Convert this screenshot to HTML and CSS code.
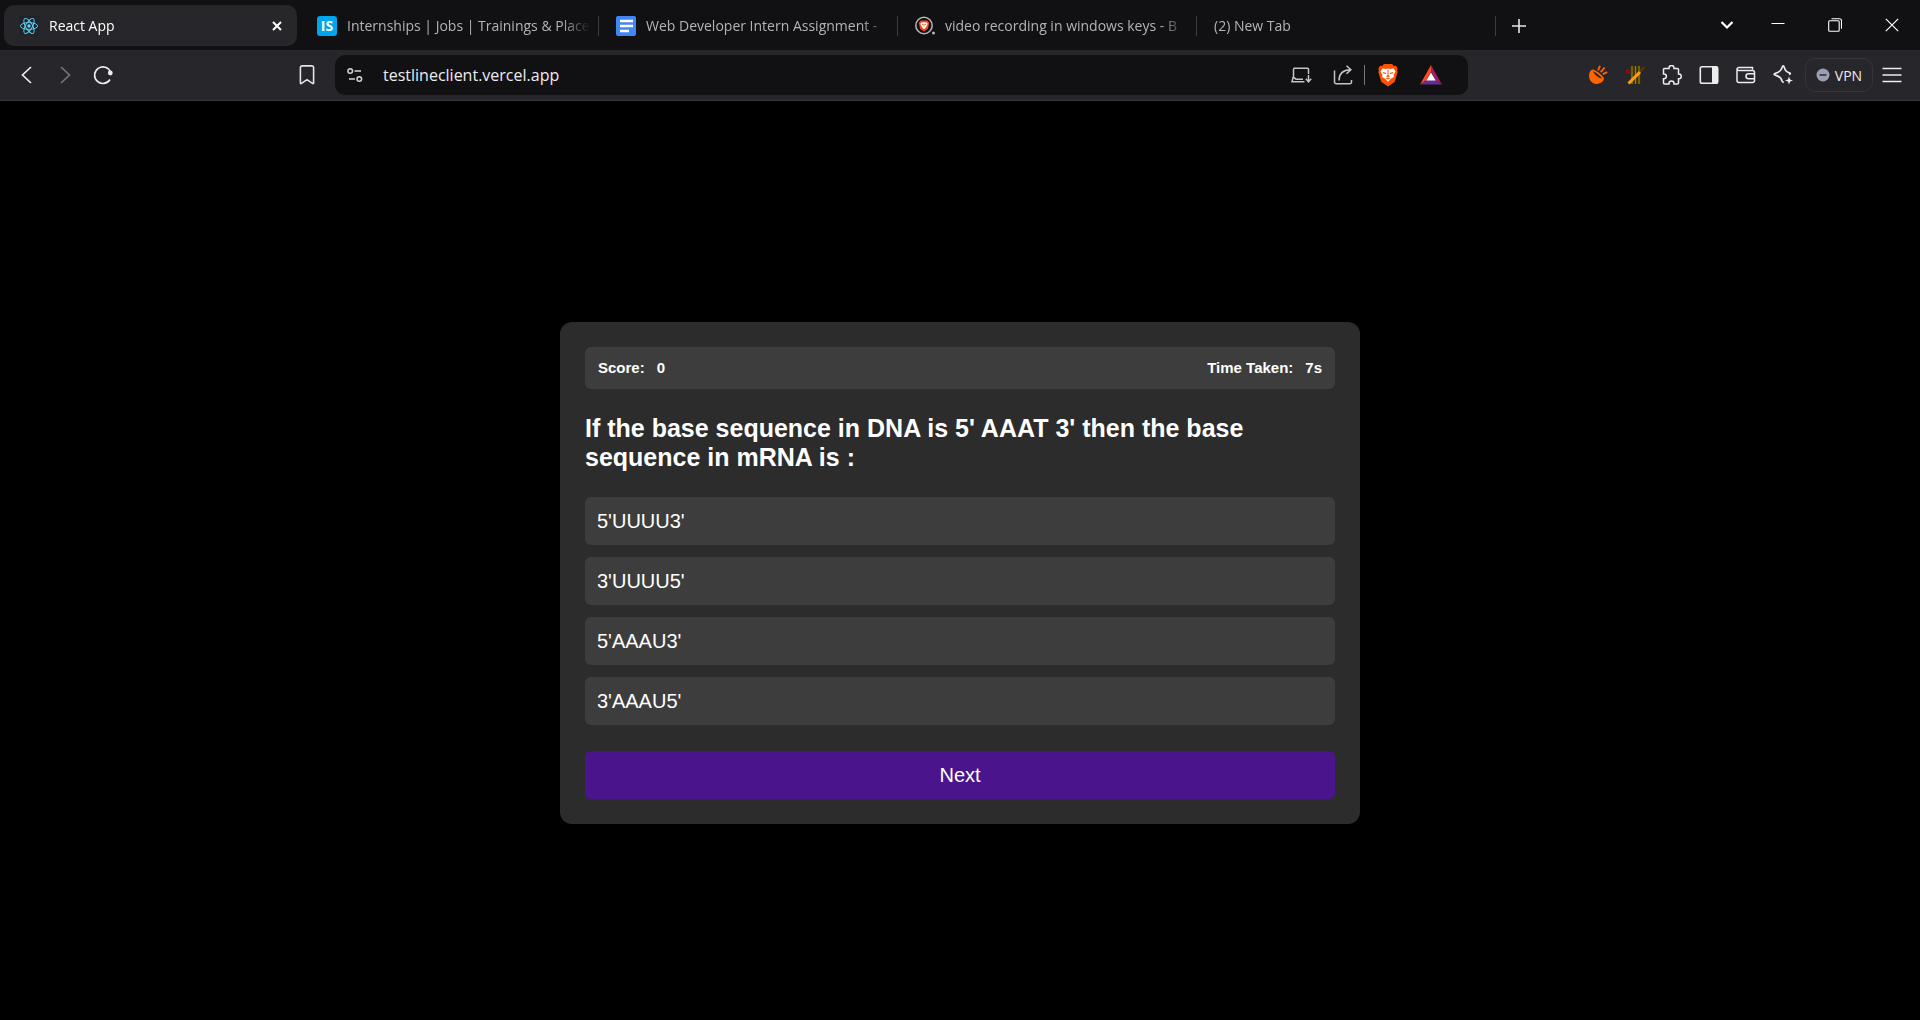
FILE: index.html
```html
<!DOCTYPE html>
<html lang="en">
<head>
<meta charset="utf-8">
<meta name="viewport" content="width=device-width, initial-scale=1">
<title>React App</title>
<link rel="stylesheet" href="styles.css">
</head>
<body>
<header class="browser">
  <div class="tabstrip">
    <div class="tabs">
      <div class="tab tab-active">
        <svg class="favicon" viewBox="0 0 20 20" width="20" height="20"><rect width="20" height="20" fill="#20232a"/><g fill="none" stroke="#61dafb" stroke-width="0.9"><ellipse cx="10" cy="10" rx="8.6" ry="3.4"/><ellipse cx="10" cy="10" rx="8.6" ry="3.4" transform="rotate(60 10 10)"/><ellipse cx="10" cy="10" rx="8.6" ry="3.4" transform="rotate(120 10 10)"/></g><circle cx="10" cy="10" r="1.7" fill="#61dafb"/></svg>
        <span class="tab-title">React App</span>
        <button class="tab-close" aria-label="Close tab"><svg viewBox="0 0 12 12" width="12" height="12"><path d="M2 2l8 8M10 2l-8 8" fill="none" stroke="#fff" stroke-width="2"/></svg></button>
      </div>
      <div class="tab">
        <span class="favicon favicon-is">IS</span>
        <span class="tab-title">Internships | Jobs | Trainings &amp; Place</span>
      </div>
      <div class="tab">
        <svg class="favicon" viewBox="0 0 20 20" width="20" height="20"><rect width="20" height="20" rx="2" fill="#4285f4"/><path d="M4 5h13M4 10h13M4 15h9" stroke="#fff" stroke-width="2.4" fill="none"/></svg>
        <span class="tab-title">Web Developer Intern Assignment -</span>
      </div>
      <div class="tab">
        <svg class="favicon" viewBox="0 0 20 20" width="20" height="20"><circle cx="9" cy="9.500" r="8.200" fill="none" stroke="#b5b5bd" stroke-width="1.500"/><path d="M5.800 4.500h6.400l2 2.200-1.300 6L9 15.500l-3.900-2.800-1.300-6z" fill="#f4471f"/><path d="M5.800 6.800L9 6.200l3.200.600.400 1.200-1.400 3L9 13.200 6.800 11 5.400 8z" fill="#fff"/><path d="M7 8.500h1.200M9.800 8.500H11M9 8v2.500" stroke="#f4471f" stroke-width=".8"/><circle cx="18.500" cy="17" r="1.500" fill="#b5b5bd"/></svg>
        <span class="tab-title">video recording in windows keys - B</span>
      </div>
      <div class="tab">
        <span class="tab-title">(2) New Tab</span>
      </div>
      <button class="new-tab" aria-label="New tab"><svg viewBox="0 0 14 14" width="14" height="14"><path d="M7 0v14M0 7h14" stroke="#e6e6e8" stroke-width="1.600" fill="none"/></svg></button>
    </div>
    <div class="window-controls">
      <button class="control control-search" aria-label="Search tabs"><svg viewBox="0 0 14 10" width="14" height="10"><path d="M1.500 2L7 7.500 12.500 2" fill="none" stroke="#fff" stroke-width="2.200"/></svg></button>
      <button class="control" aria-label="Minimize"><svg viewBox="0 0 14 14" width="14" height="14"><path d="M.5 5.500h13" stroke="#fff" fill="none"/></svg></button>
      <button class="control" aria-label="Restore"><svg viewBox="0 0 14 14" width="14" height="14"><g fill="none" stroke="#fff" stroke-width="1.100"><rect x=".7" y="2.700" width="10.500" height="10.500" rx="1"/><path d="M3.500.700h8a2 2 0 0 1 2 2v8"/></g></svg></button>
      <button class="control" aria-label="Close"><svg viewBox="0 0 14 14" width="14" height="14"><path d="M.8.800l12.400 12.400M13.200.800L.8 13.200" stroke="#fff" stroke-width="1.200" fill="none"/></svg></button>
    </div>
  </div>
  <div class="toolbar">
    <nav class="nav-buttons" aria-label="Navigation">
      <button class="tool tool-nav" aria-label="Back"><svg viewBox="0 0 20 20" width="20" height="20"><path d="M14 2L5.500 10l8.500 8" fill="none" stroke="#ededf0" stroke-width="1.700"/></svg></button>
      <button class="tool tool-nav" aria-label="Forward"><svg viewBox="0 0 20 20" width="20" height="20"><path d="M6 2l8.500 8L6 18" fill="none" stroke="#75757b" stroke-width="1.700"/></svg></button>
      <button class="tool tool-nav" aria-label="Reload"><svg viewBox="0 0 20 20" width="20" height="20"><path d="M17.600 7A8.300 8.300 0 1 0 17 14.500" fill="none" stroke="#ededf0" stroke-width="1.600"/><circle cx="17.300" cy="8" r="2.400" fill="#ededf0"/></svg></button>
      <button class="tool bookmark" aria-label="Bookmark this page"><svg viewBox="0 0 20 20" width="20" height="20"><path d="M5.200.900h9.600a1.800 1.800 0 0 1 1.800 1.800v15.200c0 .7-.6.900-1.100.5L10 14.700l-5.500 3.700c-.5.400-1.100.2-1.100-.5V2.700A1.800 1.800 0 0 1 5.200.900z" fill="none" stroke="#e4e4e8" stroke-width="1.600"/></svg></button>
    </nav>
    <div class="address">
      <button class="site-info" aria-label="Site information"><svg viewBox="0 0 16 16" width="16" height="16"><g fill="none" stroke="#d6d6da" stroke-width="1.500"><circle cx="3.200" cy="4" r="2.300"/><path d="M7.500 4H14M2 12h6"/><circle cx="12.300" cy="12" r="2.300"/></g></svg></button>
      <input class="url" type="text" aria-label="Address" value="testlineclient.vercel.app">
      <button class="tool tool-address" aria-label="Install app"><svg viewBox="0 0 22 20" width="22" height="20"><g fill="none" stroke="#c4c4c8" stroke-width="1.500"><path d="M18.500 9V4.300a1 1 0 0 0-1-1h-13a1 1 0 0 0-1 1V13"/><path d="M13 14.200H6l-1.800-1.400H3l-1 3.900h12.500"/><path d="M18.500 10v6M15.800 13.800l2.700 3 2.700-3"/></g></svg></button>
      <button class="tool tool-address" aria-label="Share"><svg viewBox="0 0 20 20" width="20" height="20"><g fill="none" stroke="#c4c4c8" stroke-width="1.500"><path d="M1.500 5.500V17a1.700 1.700 0 0 0 1.700 1.700h13.600a1.700 1.700 0 0 0 1.700-1.700v-2"/><path d="M6 15.500C6 9 10 5 17.500 4.800M13.500.800l4.400 4-4.400 4"/></g></svg></button>
      <span class="divider"></span>
      <button class="tool tool-brand" aria-label="Brave Shields"><svg viewBox="0 0 20 24" width="20" height="24"><path d="M6 1h8l2 2 2-.2 1.700 3-.6 1.700.5 1.500-2.800 9.800L10 23.400 3.200 18.800.4 9l.5-1.500-.6-1.700 1.700-3L4 3z" fill="#ff5000"/><path d="M4.500 5.500L8 6l2-.6 2 .6 3.500-.5 2 3.200-2 3 .4 2.300-2.700 1.500L10 18.800l-3.200-3.300L4.100 14l.4-2.300-2-3z" fill="#fff"/><path d="M4.800 9l3.600.9-.6 1.200-2.600-.6zM15.200 9l-3.600.9.600 1.200 2.600-.6zM9.500 7h1v5l1.400 1.300L10 14.200l-1.900-.9L9.500 12zM7.300 15L10 14.800l2.700.2L10 16.500z" fill="#ff5000"/></svg></button>
      <button class="tool tool-brand" aria-label="Brave Rewards"><svg viewBox="0 0 24 20" width="24" height="20"><path d="M12 0v7L7.500 15 1 19.500z" fill="#ff4724"/><path d="M12 0l11 19.500-6.500-4.500L12 7z" fill="#9e1f63"/><path d="M1 19.500L7.500 15h9l6.500 4.500z" fill="#662d91"/><path d="M12 7.500l4.700 8H7.300z" fill="#fff"/></svg></button>
    </div>
    <div class="extensions">
      <button class="tool tool-ext" aria-label="Extension"><svg viewBox="0 0 20 20" width="20" height="20"><path d="M4.200 4.600C.8 6.500.2 11.200 2.200 15.300c2.200 4.500 8.700 4.600 12 1.500 1.700-1.500 2-3.300 1.400-4.300C14 10 7 4 4.200 4.600z" fill="#ff6400"/><path d="M5 6.200c3 1 7 4.400 9 7.300-3.300-.4-7.600-3.800-9-7.300z" fill="#26262b"/><path d="M10 5.300L12 .8M12.700 7.200l4-4.700M14.800 9.200l4.500-2" stroke="#ff6400" stroke-width="1.900" fill="none"/></svg></button>
      <button class="tool tool-ext" aria-label="Cricket scores"><svg viewBox="0 0 20 20" width="20" height="20"><path d="M7 1v18M10.500 1v18M14 1v18" stroke="#4d3e00" stroke-width="2.600"/><path d="M7 1v18M10.500 1v18M14 1v18" stroke="#a58600" stroke-width="1"/><circle cx="2.800" cy="6.500" r="2.500" fill="#830f0f"/><path d="M14 7.500L19.500 2" stroke="#60350a" stroke-width="2"/><path d="M3.500 18.500L15 7" stroke="#ff9e16" stroke-width="3"/></svg></button>
      <button class="tool tool-ext" aria-label="Extensions"><svg viewBox="0 0 20 20" width="20" height="20"><path d="M2.500 3.500H7V3a2.500 2.500 0 0 1 5 0v.5h3.500a1 1 0 0 1 1 1V9h.4a2.400 2.400 0 0 1 0 4.800h-.4V18a1 1 0 0 1-1 1H12v-.5a2.500 2.500 0 0 0-5 0v.5H2.500a1 1 0 0 1-1-1v-4.300H2a2.400 2.400 0 0 0 0-4.800h-.5V4.500a1 1 0 0 1 1-1z" fill="none" stroke="#ededf0" stroke-width="1.500"/></svg></button>
      <button class="tool tool-ext" aria-label="Sidebar"><svg viewBox="0 0 20 20" width="20" height="20"><rect x="1.300" y="1.800" width="17.400" height="16.400" rx="1.800" fill="none" stroke="#ededf0" stroke-width="1.600"/><path d="M13 1.500h5.500v17H13z" fill="#ededf0"/></svg></button>
      <button class="tool tool-ext" aria-label="Wallet"><svg viewBox="0 0 20 20" width="20" height="20"><g fill="none" stroke="#ededf0" stroke-width="1.500"><path d="M16.500 4.500v-2H3a2 2 0 0 0-2 2v11a2 2 0 0 0 2 2h13.500a2 2 0 0 0 2-2V7.500a2 2 0 0 0-2-2H3a2 2 0 0 1-2-2"/><path d="M18.500 8.800h-6a2.500 2.500 0 0 0 0 5h6"/></g></svg></button>
      <button class="tool tool-ext" aria-label="Leo AI"><svg viewBox="0 0 20 20" width="20" height="20"><path d="M16 9.500c2-.7 1.500-1.200.500-1.600-3-.8-4.400-2-5.200-5.500-.6-2-1.600-2-2.200 0-.9 3.500-2.400 4.700-6.700 5.900-1.700.5-1.700 1.300 0 1.800 4.300 1.200 5.800 2.400 6.700 5.900.4 1.300 1 1.300 1.600.7" fill="none" stroke="#ededf0" stroke-width="1.700"/><path d="M16 11.500l1.100 2.900 2.900 1.100-2.900 1.100L16 19.500l-1.100-2.900-2.900-1.100 2.900-1.100z" fill="#ededf0"/></svg></button>
      <button class="vpn"><svg viewBox="0 0 14 14" width="14" height="14"><circle cx="7" cy="7" r="6.500" fill="#9c9eb5"/><path d="M3.500 7h7" stroke="#2c2d38" stroke-width="1.500"/></svg>VPN</button>
      <button class="tool tool-menu" aria-label="Menu"><svg viewBox="0 0 20 20" width="20" height="20"><path d="M0.500 3.500h19M0.500 10h19M0.500 16.500h19" stroke="#ededf0" stroke-width="1.600"/></svg></button>
    </div>
  </div>
</header>
<main class="page">
  <section class="quiz">
    <div class="stats">
      <p class="stat"><span>Score:</span><span>0</span></p>
      <p class="stat"><span>Time Taken:</span><span>7s</span></p>
    </div>
    <h2 class="question">If the base sequence in DNA is 5' AAAT 3' then the base sequence in mRNA is :</h2>
    <div class="options">
      <button class="option">5'UUUU3'</button>
      <button class="option">3'UUUU5'</button>
      <button class="option">5'AAAU3'</button>
      <button class="option">3'AAAU5'</button>
    </div>
    <button class="next">Next</button>
  </section>
</main>
</body>
</html>
```
FILE: styles.css
```css
* {
  box-sizing: border-box;
}

body {
  margin: 0;
  min-height: 100vh;
  display: flex;
  flex-direction: column;
  background: #000;
  color: #fff;
  font-family: "Liberation Sans", Arial, sans-serif;
}

button {
  border: 0;
  padding: 0;
  background: none;
  color: inherit;
  font: inherit;
}

svg {
  display: block;
  flex: none;
}

/* Browser chrome */

.browser {
  font-family: "Open Sans", "Noto Sans", sans-serif;
  font-size: 14px;
}

.tabstrip {
  display: flex;
  justify-content: space-between;
  height: 50px;
  background: #111113;
}

.tabs {
  display: flex;
  flex: 1;
  min-width: 0;
  align-items: center;
  padding: 1px 0 0 4px;
}

.tab {
  display: flex;
  flex: 0 1 299px;
  min-width: 0;
  align-items: center;
  gap: 10px;
  height: 20px;
  padding: 0 8px 0 17px;
  border-right: 1px solid #3b3b40;
  color: #b4b4b7;
}

.tab-active {
  flex-basis: 293px;
  height: 41px;
  margin-right: 3px;
  padding: 0 14px 0 15px;
  border: 0;
  border-radius: 10px;
  background: #26262b;
  color: #fff;
}

.favicon {
  flex: none;
}

.favicon-is {
  width: 20px;
  border-radius: 3px;
  background: #00a5ec;
  color: #fff;
  font-size: 14px;
  font-weight: 700;
  line-height: 20px;
  text-align: center;
}

.tab-title {
  flex: 1;
  overflow: hidden;
  line-height: 20px;
  white-space: nowrap;
  mask-image: linear-gradient(to right, #000 calc(100% - 28px), transparent);
}

.new-tab {
  flex: none;
  padding: 4px 16px;
}

.window-controls {
  display: flex;
}

.control {
  display: grid;
  place-items: center;
  width: 57px;
}

.control-search {
  width: 44px;
}

.toolbar {
  display: flex;
  align-items: center;
  height: 51px;
  border-bottom: 1px solid #34343a;
  background: #26262b;
}

.tool {
  display: grid;
  place-items: center;
  flex: none;
  width: 37px;
  height: 36px;
}

.nav-buttons {
  display: flex;
  width: 335px;
  padding: 0 10px 0 8px;
}

.tool-nav {
  width: 38px;
}

.bookmark {
  margin-left: auto;
}

.address {
  display: flex;
  flex: 1;
  min-width: 0;
  align-items: center;
  height: 40px;
  padding: 0 17px 0 12px;
  border-radius: 10px;
  background: #111113;
}

.site-info {
  flex: none;
}

.url {
  flex: 1;
  min-width: 0;
  margin-left: 20px;
  padding: 0;
  border: 0;
  outline: 0;
  background: none;
  color: #ececee;
  font: inherit;
  font-size: 16px;
}

.tool-address {
  width: 42px;
}

.divider {
  width: 1px;
  height: 20px;
  background: #77777b;
}

.tool-brand {
  width: 46px;
}

.tool-brand + .tool-brand {
  width: 40px;
}

.extensions {
  display: flex;
  align-items: center;
  margin-left: 111px;
  padding-right: 9px;
}

.vpn {
  display: flex;
  align-items: center;
  justify-content: center;
  gap: 5px;
  width: 68px;
  height: 34px;
  margin-left: 4px;
  border: 1px solid #34343a;
  border-radius: 10px;
  color: #ededf0;
}

.tool-menu {
  width: 38px;
}

/* Quiz page */

.page {
  display: flex;
  flex: 1;
  align-items: center;
  justify-content: center;
  padding-top: 24px;
}

.quiz {
  width: 100%;
  max-width: 800px;
  padding: 25px;
  border-radius: 12px;
  background: #2c2c2c;
}

.stats {
  display: flex;
  justify-content: space-between;
  padding: 12px 13px;
  border-radius: 6px;
  background: #3d3d3d;
  font-size: 15px;
  font-weight: 700;
  line-height: 18px;
}

.stat {
  display: flex;
  gap: 12px;
  margin: 0;
}

.question {
  margin: 25px 0;
  font-size: 25px;
  line-height: 29px;
}

.options {
  display: grid;
  gap: 12px;
}

.option,
.next {
  width: 100%;
  padding: 12px;
  border-radius: 6px;
  font-size: 20px;
  line-height: 24px;
}

.option {
  background: #3d3d3d;
  text-align: left;
}

.next {
  margin-top: 26px;
  background: #4a148c;
}
```
